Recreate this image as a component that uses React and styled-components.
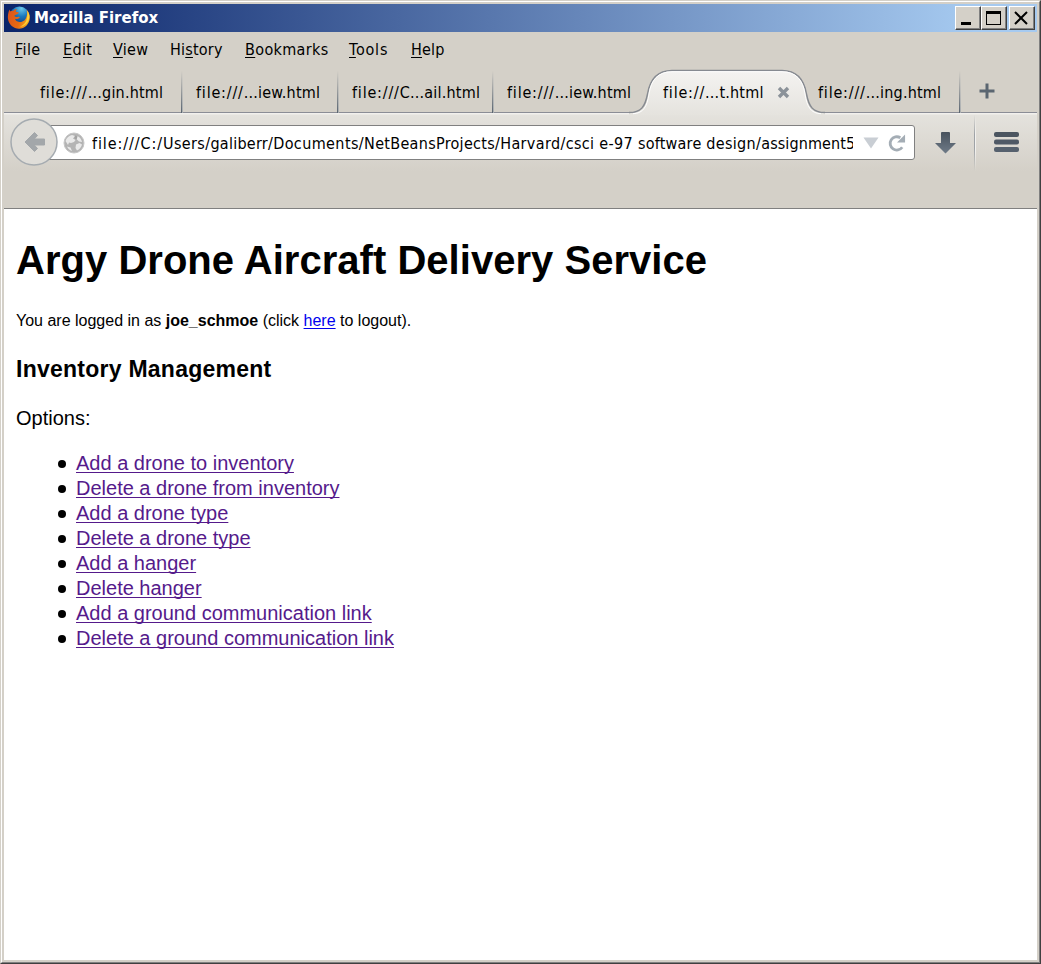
import React from "react";
import styled, { createGlobalStyle } from "styled-components";

const Global = createGlobalStyle`
  * { box-sizing: border-box; }
  html, body { margin: 0; padding: 0; }
  body { width: 1041px; height: 964px; overflow: hidden; }
`;

const Frame = styled.div`
  width: 1041px;
  height: 964px;
  display: flex;
  border-style: solid;
  border-width: 1px;
  border-color: #d4d0c8 #404040 #404040 #d4d0c8;
`;
const InnerFrame = styled.div`
  flex: 1;
  min-width: 0;
  display: flex;
  flex-direction: column;
  padding: 2px;
  background: #d4d0c8;
  border-style: solid;
  border-width: 1px;
  border-color: #fff #808080 #808080 #fff;
`;
const ui = `font-family: "DejaVu Sans Condensed", "DejaVu Sans", sans-serif; font-stretch: condensed; color: #000; white-space: pre;`;

const TitleBar = styled.div`
  height: 28px;
  flex: none;
  display: flex;
  align-items: center;
  padding: 0 2px 0 3px;
  background: linear-gradient(90deg, #0a246a, #a6caf0 94%);
`;
const Title = styled.div`
  flex: 1;
  margin-left: 3px;
  font-family: "DejaVu Sans", sans-serif;
  font-size: 15px;
  font-weight: bold;
  line-height: 28px;
  color: #fff;
`;
const WinButton = styled.div`
  width: 26px;
  height: 24px;
  margin-left: ${(p) => (p.$gap ? 2 : 0)}px;
  background: #d4d0c8;
  border: 1px solid;
  border-color: #fff #404040 #404040 #fff;
  box-shadow: inset -1px -1px #808080;
  svg { display: block; }
`;

const MenuBar = styled.div`
  height: 34px;
  flex: none;
  display: flex;
  padding-left: 11px;
`;
const MenuItem = styled.div`
  ${ui}
  width: ${(p) => p.$w}px;
  font-size: 16px;
  line-height: 36px;
  letter-spacing: ${(p) => p.$ls}px;
  u { text-underline-offset: 2px; text-decoration-thickness: 1px; text-decoration-skip-ink: none; }
`;

const TabStrip = styled.div`
  height: 47px;
  flex: none;
  display: flex;
  padding-left: 23px;
  border-bottom: 1px solid #8b8d96;
`;
const Tab = styled.div`
  position: relative;
  width: ${(p) => p.$w}px;
  height: 46px;
  padding-left: ${(p) => p.$pad ?? 13}px;
  display: flex;
`;
const TabText = styled.div`
  ${ui}
  position: relative;
  font-size: 16px;
  line-height: 54px;
  height: 46px;
`;
const Run = styled.span`
  letter-spacing: ${(p) => p.$ls}px;
`;
const TabDivider = styled.div`
  width: 2px;
  height: 42px;
  margin: 5px 0 0 auto;
  background: linear-gradient(90deg, #596470 50%, #a9adb0 50%);
  mask-image: linear-gradient(transparent, #000);
`;
const TabShape = styled.svg`
  position: absolute;
  left: -20px;
  top: 3px;
`;
const TabClose = styled.svg`
  position: relative;
  margin: 20px 0 0 13px;
`;
const NewTab = styled.div`
  padding: 17px 0 0 18px;
  svg { display: block; }
`;

const NavBar = styled.div`
  height: 96px;
  flex: none;
  display: flex;
  align-items: flex-start;
  padding: 0 0 0 6px;
  border-bottom: 1px solid #808080;
  background: linear-gradient(#f2f0ed 0, #f2f0ed 1px, #e4e2dd 2px, #d4d0c8 58px);
`;
const Back = styled.svg`
  position: relative;
  z-index: 1;
  margin-top: 5px;
  flex: none;
`;
const UrlBox = styled.div`
  width: 877px;
  height: 35px;
  margin: 12px 0 0 -20px;
  display: flex;
  align-items: center;
  padding-left: 24px;
  background: #fff;
  border: 1px solid #808080;
  border-radius: 3px;
`;
const UrlText = styled.div`
  ${ui}
  width: 761px;
  overflow: hidden;
  margin-left: 7px;
  font-size: 16px;
  height: 33px;
  line-height: 35px;
`;
const NavIcon = styled.svg`
  flex: none;
  margin: ${(p) => p.$m};
`;
const NavDivider = styled.div`
  width: 2px;
  height: 56px;
  margin: 2px 0 0 17px;
  background: linear-gradient(90deg, #9ea2a6 50%, #f3f2f0 50%);
  mask-image: linear-gradient(transparent, #000 35%, #000 60%, transparent);
`;

const Page = styled.main`
  flex: 1;
  background: #fff;
  padding: 28px 12px 0;
  font-family: "Liberation Sans", Arial, sans-serif;
  color: #000;
  white-space: nowrap;
`;
const Heading = styled.h1`
  margin: 0;
  font-size: 40px;
  line-height: 46px;
  letter-spacing: 0.03px;
`;
const Login = styled.p`
  margin: 29px 0 0;
  font-size: 16px;
  line-height: 18px;
`;
const Link = styled.a`
  color: ${(p) => (p.$fresh ? "#0000ee" : "#551a8b")};
  text-decoration: underline;
  text-decoration-thickness: 1px;
  text-underline-offset: 2px;
  text-decoration-skip-ink: none;
`;
const SubHeading = styled.h2`
  margin: 25px 0 0;
  font-size: 23px;
  line-height: 28px;
  letter-spacing: 0.25px;
`;
const Label = styled.p`
  margin: 23px 0 0;
  font-size: 20px;
  line-height: 24px;
`;
const List = styled.ul`
  margin: 21px 0 0;
  padding: 0 0 0 42px;
  list-style: none;
  font-size: 20px;
  line-height: 25px;
`;
const Item = styled.li`
  display: flex;
  align-items: center;
  height: 25px;
`;
const Bullet = styled.span`
  width: 8px;
  height: 8px;
  margin: 0 10px 0 0;
  border-radius: 50%;
  background: #000;
`;

const FirefoxLogo = () => (
  <svg width="24" height="24" viewBox="0 0 24 24">
    <defs>
      <radialGradient id="globe" cx=".6" cy=".1" r=".8">
        <stop offset="0" stopColor="#6cc8ea" />
        <stop offset=".5" stopColor="#1878bd" />
        <stop offset="1" stopColor="#173e80" />
      </radialGradient>
      <linearGradient id="fox" x1="0" y1="0" x2="1" y2=".3">
        <stop offset="0" stopColor="#d9531e" />
        <stop offset=".65" stopColor="#e66a12" />
        <stop offset="1" stopColor="#f6a21c" />
      </linearGradient>
    </defs>
    <circle cx="12.500" cy="10.500" r="10" fill="url(#globe)" />
    <path d="M2.500 3.500C1 7 .7 10 1 13c.8 5.500 5.500 9.700 11 9.700S22.500 18.200 22.800 12c.1-3.500-1-6-3.300-8.500.8 2.500 1 4.500.2 6.500-.8 4-3.700 6.300-7.300 6-2.500-.2-4-1.600-4.300-3.200 1.500.6 3 .3 4.200-.8.7-.6.2-1.300-.7-1.300-1.400 0-1.800.6-3.200.1-.8-.3-1-.9-.7-1.600l3-1.200 1.300-1.400-3.200-.8c0-1.400.6-2 1.500-2.800C8.500 3 7 3.900 6 4.900 4.700 4.700 4 4.900 3.300 5.400Z" fill="url(#fox)" />
    <path d="M20.300 4.500c2.300 3 2.600 6.800 1.200 10-1.600 3.600-4.500 6-8.500 6.200 4-1.700 6-4 6.800-7.700.6-2.800.8-5.500.5-8.500Z" fill="#ffd83a" opacity=".9" />
  </svg>
);
const Globe = () => (
  <svg width="22" height="22" viewBox="0 0 22 22" style={{ flex: "none" }}>
    <circle cx="11" cy="11" r="10" fill="#b4b4b4" stroke="#c6c6c6" />
    <path d="M2.500 9C3.500 5.500 6 3.500 9 3L12 4 10 6.500 12.500 8 11 10 8 11 6 10.500 5 13ZM14.500 4c2 1 4 3 4.500 6l-3-.5-2.500-2.500ZM13 12.500l3.500-1.500 2.500 1.500c-.5 2.500-2.500 5-5 6L12.500 16ZM4 14.500l3.500 1 1.500 3.500C6.500 18 5 16.500 4 14.500Z" fill="#e9e9e9" />
    <path d="M12 3.500l2.500 1-1 3-2-1Z" fill="#a2a2a2" />
  </svg>
);

const menus = [
  ["", "F", "ile", 48, 0.4], ["", "E", "dit", 50, 0.35], ["", "V", "iew", 57, 0.3], ["Hi", "s", "tory", 75, 0.2],
  ["", "B", "ookmarks", 104, 0.35], ["", "T", "ools", 62, 0.8], ["", "H", "elp", 60, 0.2],
];
const urlRuns = [
  ["file:///C:/", 0.9], ["Users/", 0.38], ["galiberr/", 0.26], ["Documents/", 0.4], ["NetBeansProjects/", 0.3],
  ["Harvard/", 0.38], ["csci ", 0.3], ["e-97 ", 0.4], ["software ", 0.2], ["design/", 0.34], ["assignment5", 0.1],
];
const links = [
  "Add a drone to inventory", "Delete a drone from inventory", "Add a drone type", "Delete a drone type",
  "Add a hanger", "Delete hanger", "Add a ground communication link", "Delete a ground communication link",
];

const TabLabel = ({ scheme, rest }) => (
  <TabText><Run $ls={0.8}>{scheme}</Run><Run $ls={0.2}>{rest}</Run></TabText>
);

const ActiveShape = () => (
  <TabShape width="196" height="46" viewBox="0 0 196 46">
    <defs>
      <linearGradient id="tabfill" x1="0" y1="0" x2="0" y2="1">
        <stop offset="0" stopColor="#f4f3f1" />
        <stop offset="1" stopColor="#e5e3de" />
      </linearGradient>
    </defs>
    <path d="M0 46V44C14 44 18 37 20 25C22 10 29 2 44 2H152C167 2 174 10 176 25C178 37 182 44 196 44V46Z" fill="url(#tabfill)" />
    <path d="M0 43.500C12 43.500 16 38 18.500 25C21 10 28 1.500 43 1.500H153C168 1.500 175 10 177.500 25C180 38 184 43.500 196 43.500" fill="none" stroke="#868a91" strokeWidth="1.400" />
    <path d="M4 44.700C14 44.500 18 38 20 25C22 11 29 2.700 43 2.700H153C167 2.700 174 11 176 25C178 38 182 44.500 192 44.700" fill="none" stroke="#fff" strokeWidth="1" />
  </TabShape>
);

export default function App() {
  return (
    <>
      <Global />
      <Frame>
        <InnerFrame>
          <TitleBar>
            <FirefoxLogo />
            <Title>Mozilla Firefox</Title>
            <WinButton><svg width="24" height="22"><path d="M5 15h10v3H5z" /></svg></WinButton>
            <WinButton><svg width="24" height="22"><path d="M4 4h15v14H4zM5 7v10h13V7z" fillRule="evenodd" /></svg></WinButton>
            <WinButton $gap><svg width="24" height="22"><path d="m5 5 12 12M17 5 5 17" stroke="#000" strokeWidth="2" /></svg></WinButton>
          </TitleBar>
          <MenuBar>
            {menus.map(([a, b, c, w, ls]) => (
              <MenuItem key={b} $w={w} $ls={ls}>{a}<u>{b}</u>{c}</MenuItem>
            ))}
          </MenuBar>
          <TabStrip>
            <Tab $w={156}><TabLabel scheme="file:///" rest="...gin.html" /><TabDivider /></Tab>
            <Tab $w={156}><TabLabel scheme="file:///" rest="...iew.html" /><TabDivider /></Tab>
            <Tab $w={155}><TabLabel scheme="file:///" rest="C...ail.html" /><TabDivider /></Tab>
            <Tab $w={155}><TabLabel scheme="file:///" rest="...iew.html" /></Tab>
            <Tab $w={156} $pad={14}>
              <ActiveShape />
              <TabLabel scheme="file://" rest="...t.html" />
              <TabClose width="13" height="13" viewBox="0 0 13 13"><path d="m2 2 9 9m0-9-9 9" stroke="#8b9299" strokeWidth="3.400" /></TabClose>
            </Tab>
            <Tab $w={156}><TabLabel scheme="file:///" rest="...ing.html" /><TabDivider /></Tab>
            <NewTab><svg width="16" height="16"><path d="M8 .5v15M.5 8h15" stroke="#5b6671" strokeWidth="3" /></svg></NewTab>
          </TabStrip>
          <NavBar>
            <Back width="48" height="48" viewBox="0 0 48 48">
              <circle cx="24" cy="24" r="23" fill="#dfddd8" stroke="#a5abb0" strokeWidth="1.500" />
              <path d="M15 24 24.500 14.500 27.500 17.500 24.300 21H34.500V27H24.300L27.500 30.500 24.500 33.500Z" fill="#a3a7aa" stroke="#a3a7aa" strokeWidth="1" strokeLinejoin="round" />
            </Back>
            <UrlBox>
              <Globe />
              <UrlText>{urlRuns.map(([t, ls]) => <Run key={t} $ls={ls}>{t}</Run>)}</UrlText>
              <NavIcon $m="0 0 0 10px" width="16" height="12"><path d="M.5.500h15L8 11.500Z" fill="#c9ced4" /></NavIcon>
              <NavIcon $m="0 0 0 9px" width="18" height="20" viewBox="0 0 19 20">
                <path d="M15 14.500A7 7 0 1 1 13 4.500" fill="none" stroke="#a4adb5" strokeWidth="3" />
                <path d="M18 1v8.500H9.500Z" fill="#a4adb5" />
              </NavIcon>
            </UrlBox>
            <NavIcon $m="19px 0 0 20px" width="22" height="22" viewBox="0 0 22 22">
              <defs><linearGradient id="ink" x1="0" y1="0" x2="0" y2="1"><stop stopColor="#48525d" /><stop offset="1" stopColor="#6f7b88" /></linearGradient></defs>
              <path d="M6 1Q6 0 7 0h7q1 0 1 1v10H21L10.500 21.500 0 11h6Z" fill="url(#ink)" />
            </NavIcon>
            <NavDivider />
            <NavIcon $m="19px 0 0 18px" width="25" height="21">
              <rect width="25" height="5" rx="2" fill="#4b5560" />
              <rect y="7.500" width="25" height="5" rx="2" fill="#4f5966" />
              <rect y="15" width="25" height="5" rx="2" fill="#56616e" />
            </NavIcon>
          </NavBar>
          <Page>
            <Heading>Argy Drone Aircraft Delivery Service</Heading>
            <Login>You are logged in as <b>joe_schmoe</b> (click <Link $fresh>here</Link> to logout).</Login>
            <SubHeading>Inventory Management</SubHeading>
            <Label>Options:</Label>
            <List>
              {links.map((text) => (
                <Item key={text}><Bullet /><Link>{text}</Link></Item>
              ))}
            </List>
          </Page>
        </InnerFrame>
      </Frame>
    </>
  );
}
